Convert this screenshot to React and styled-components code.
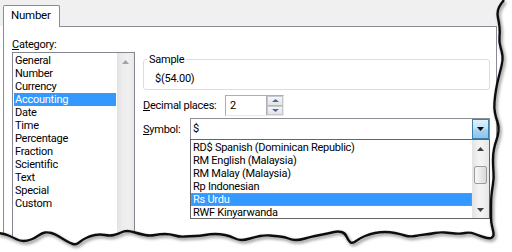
import React from 'react'
import styled, { createGlobalStyle } from 'styled-components'

const GlobalStyle = createGlobalStyle`
  body {
    margin: 0;
    background: #fff;
    font-family: "Segoe UI", Roboto, "Noto Sans", sans-serif;
    font-size: 11px;
    letter-spacing: -0.25px;
    color: #000;
  }
`

const categories = [
    'General', 'Number', 'Currency', 'Accounting', 'Date', 'Time',
    'Percentage', 'Fraction', 'Scientific', 'Text', 'Special', 'Custom',
]

const symbols = [
    'RD$ Spanish (Dominican Republic)',
    'RM English (Malaysia)',
    'RM Malay (Malaysia)',
    'Rp Indonesian',
    'Rs Urdu',
    'RWF Kinyarwanda',
]

// torn paper edge, right side top to bottom then bottom right to left
const tornEdge = [
    [504, 0], [499, 6], [497, 14], [499, 22], [500, 32], [499, 42], [502, 52], [503, 60],
    [500, 72], [497, 84], [495, 96], [494, 108], [496, 118], [499, 126], [498, 136],
    [495, 144], [493, 154], [493, 166], [494, 178], [492, 190], [491, 200], [491, 212],
    [491, 222], [493, 230], [494, 236], [490, 239], [480, 236], [470, 232], [460, 234],
    [450, 233], [440, 232], [430, 234], [420, 235], [410, 237], [400, 234], [390, 232],
    [380, 232], [370, 234], [360, 238], [352, 244], [348, 240], [345, 233], [338, 231],
    [330, 233], [320, 235], [310, 237], [300, 240], [292, 240], [285, 237], [275, 236],
    [265, 235], [255, 237], [245, 240], [238, 240], [230, 236], [220, 234], [210, 234],
    [200, 236], [190, 236], [180, 237], [170, 234], [160, 234], [150, 236], [140, 234],
    [130, 231], [124, 231], [118, 234], [110, 236], [100, 234], [90, 236], [82, 240],
    [76, 245], [70, 243], [63, 239], [55, 234], [48, 232], [42, 233], [35, 238],
    [27, 241], [20, 241], [12, 237], [5, 234], [-2, 233],
]

function smoothPath(pts) {
    let d = `M${pts[0][0]},${pts[0][1]}`
    for (let i = 1; i < pts.length - 1; i++) {
        const mx = (pts[i][0] + pts[i + 1][0]) / 2
        const my = (pts[i][1] + pts[i + 1][1]) / 2
        d += ` Q${pts[i][0]},${pts[i][1]} ${mx},${my}`
    }
    const last = pts[pts.length - 1]
    return d + ` L${last[0]},${last[1]}`
}

function Arrow({ dir = 'down', color = '#000', w = 7, h = 4 }) {
    const d = dir === 'down' ? `M0,0 L${w},0 L${w / 2},${h} Z` : `M0,${h} L${w},${h} L${w / 2},0 Z`
    return (
        <svg width={w} height={h} viewBox={`0 0 ${w} ${h}`}>
            <path d={d} fill={color} />
        </svg>
    )
}

function App() {
    const edge = smoothPath(tornEdge)
    return (
        <>
            <GlobalStyle />
            <Sheet>
                <TabStrip>
                    <Tab>Number</Tab>
                </TabStrip>
                <Panel>
                    <LeftCol>
                        <FieldLabel><u>C</u>ategory:</FieldLabel>
                        <ListBox>
                            <ListItems>
                                {categories.map(c => (
                                    <ListItem key={c} selected={c === 'Accounting'}>{c}</ListItem>
                                ))}
                            </ListItems>
                            <ScrollTrack>
                                <ScrollButton><Arrow dir="up" color="#a3a3a3" /></ScrollButton>
                            </ScrollTrack>
                        </ListBox>
                    </LeftCol>

                    <RightCol>
                        <SampleGroup>
                            <Legend>Sample</Legend>
                            <SampleValue>$(54.00)</SampleValue>
                        </SampleGroup>

                        <FieldRow gap={5}>
                            <RowLabel width={82}><u>D</u>ecimal places:</RowLabel>
                            <SpinBox>
                                <SpinValue>2</SpinValue>
                                <SpinButtons>
                                    <SpinButton><Arrow dir="up" color="#4d6a9a" w={7} h={3} /></SpinButton>
                                    <SpinButton><Arrow dir="down" color="#4d6a9a" w={7} h={3} /></SpinButton>
                                </SpinButtons>
                            </SpinBox>
                        </FieldRow>

                        <FieldRow gap={2}>
                            <RowLabel width={47}><u>S</u>ymbol:</RowLabel>
                            <Combo>
                                <ComboValue>$</ComboValue>
                                <DropButton><Arrow dir="down" /></DropButton>
                            </Combo>
                        </FieldRow>

                        <DropList>
                            <DropItems>
                                {symbols.map(s => (
                                    <DropItem key={s} selected={s === 'Rs Urdu'}>{s}</DropItem>
                                ))}
                            </DropItems>
                            <DropScroll>
                                <ScrollButton><Arrow dir="up" color="#404040" /></ScrollButton>
                                <Thumb />
                                <ScrollButton><Arrow dir="down" color="#404040" /></ScrollButton>
                            </DropScroll>
                        </DropList>
                    </RightCol>
                </Panel>

                <TornOverlay viewBox="0 0 512 252" width="512" height="252">
                    <defs>
                        <filter id="soft" x="-5%" y="-5%" width="110%" height="110%">
                            <feGaussianBlur stdDeviation="0.7" />
                        </filter>
                        <filter id="shade" x="-5%" y="-5%" width="110%" height="110%">
                            <feGaussianBlur stdDeviation="1.6" />
                        </filter>
                    </defs>
                    <path d={`${edge} L-2,260 L520,260 L520,-2 Z`} fill="#fff" />
                    <path d={edge} fill="none" stroke="#9a9a9a" strokeWidth="3" filter="url(#shade)" transform="translate(1.5,2)" />
                    <path d={edge} fill="none" stroke="#111" strokeWidth="2.4" filter="url(#soft)" />
                </TornOverlay>
            </Sheet>
        </>
    )
}

export default App

const Sheet = styled.div`
    position: relative;
    width: 512px;
    height: 252px;
    overflow: hidden;
    background: #fff;
`

const TabStrip = styled.div`
    display: flex;
    align-items: flex-end;
    height: 26px;
    padding: 5px 0 0 3px;
    box-sizing: border-box;
    background: #f0f0f0;
`

const Tab = styled.div`
    position: relative;
    z-index: 1;
    width: 57px;
    height: 22px;
    margin-bottom: -1px;
    box-sizing: border-box;
    padding-left: 7px;
    line-height: 19px;
    font-size: 11.5px;
    background: #fff;
    border: 1px solid #898c95;
    border-bottom: none;
    border-radius: 2px 2px 0 0;
`

const Panel = styled.div`
    display: flex;
    gap: 8px;
    width: 494px;
    height: 226px;
    margin-left: 3px;
    padding: 10px 6px 0 8px;
    box-sizing: border-box;
    background: #fff;
    border: 1px solid #898c95;
    border-bottom: none;
`

const LeftCol = styled.div`
    display: flex;
    flex-direction: column;
    width: 123px;
`

const FieldLabel = styled.div`
    height: 15px;
    line-height: 15px;
`

const ListBox = styled.div`
    flex: 1;
    display: flex;
    border: 1px solid #828790;
`

const ListItems = styled.div`
    flex: 1;
    padding: 1px 1px 0 1px;
`

const ListItem = styled.div`
    height: 13px;
    line-height: 13px;
    padding-left: 1px;
    white-space: nowrap;
    background: ${p => (p.selected ? '#3399ff' : 'transparent')};
    color: ${p => (p.selected ? '#fff' : '#000')};
`

const ScrollTrack = styled.div`
    width: 17px;
    display: flex;
    flex-direction: column;
    background: linear-gradient(to right, #e2e2e2, #ececec 30%, #f0f0f0 70%, #e8e8e8);
`

const ScrollButton = styled.div`
    height: 17px;
    display: flex;
    align-items: center;
    justify-content: center;
`

const RightCol = styled.div`
    display: flex;
    flex-direction: column;
    width: 347px;
    margin-top: 22px;
`

const SampleGroup = styled.div`
    position: relative;
    height: 31px;
    box-sizing: border-box;
    padding: 11px 0 0 11px;
    border: 1px solid #d5dfe5;
    border-radius: 3px;
`

const Legend = styled.span`
    position: absolute;
    left: 3px;
    top: -8px;
    padding: 0 2px;
    line-height: 15px;
    background: #fff;
`

const SampleValue = styled.div`
    line-height: 15px;
`

const FieldRow = styled.div`
    display: flex;
    align-items: center;
    margin-top: ${p => p.gap}px;
`

const RowLabel = styled.div`
    width: ${p => p.width}px;
    flex-shrink: 0;
    line-height: 15px;
`

const SpinBox = styled.div`
    display: flex;
    width: 59px;
    height: 21px;
    box-sizing: border-box;
    border: 1px solid #abadb3;
    border-right-color: #e3e9ef;
    border-bottom-color: #e3e9ef;
`

const SpinValue = styled.div`
    flex: 1;
    padding-left: 4px;
    line-height: 19px;
`

const SpinButtons = styled.div`
    display: flex;
    flex-direction: column;
    width: 16px;
    border-left: 1px solid #abadb3;
`

const SpinButton = styled.div`
    flex: 1;
    display: flex;
    align-items: center;
    justify-content: center;
    background: linear-gradient(#f6f6f6, #e4e4e4);
    border: 1px solid #c6c9cf;
    &:first-child { border-bottom-color: #b5b8bd; }
`

const Combo = styled.div`
    display: flex;
    width: 300px;
    height: 22px;
    box-sizing: border-box;
    border: 1px solid #8d9096;
    border-bottom-color: #595959;
`

const ComboValue = styled.div`
    flex: 1;
    padding-left: 2px;
    line-height: 19px;
`

const DropButton = styled.div`
    width: 17px;
    box-sizing: border-box;
    display: flex;
    align-items: center;
    justify-content: center;
    border: 1px solid #3c7fb1;
    background: linear-gradient(#e1f1fb 0%, #c3e3f8 45%, #a4d3f3 55%, #8dc3e9 100%);
`

const DropList = styled.div`
    display: flex;
    width: 300px;
    height: 80px;
    margin-left: 47px;
    margin-top: -1px;
    box-sizing: border-box;
    border: 1px solid #646464;
`

const DropItems = styled.div`
    flex: 1;
    padding: 1px 0 0 1px;
`

const DropItem = styled.div`
    height: 13px;
    line-height: 11px;
    box-sizing: border-box;
    padding-left: 1px;
    white-space: nowrap;
    background: ${p => (p.selected ? '#3399ff' : 'transparent')};
    color: ${p => (p.selected ? '#fff' : '#000')};
    border: 1px dotted ${p => (p.selected ? '#d98b3c' : 'transparent')};
    margin-left: -1px;
`

const DropScroll = styled.div`
    width: 17px;
    display: flex;
    flex-direction: column;
    justify-content: space-between;
    background: linear-gradient(to right, #e3e3e3, #f2f2f2 40%, #f2f2f2 60%, #e6e6e6);
`

const Thumb = styled.div`
    height: 16px;
    margin: 0 2px;
    border: 1px solid #9c9c9c;
    border-radius: 2px;
    background: linear-gradient(to right, #f7f7f7, #e9e9e9 50%, #d9d9d9);
    margin-top: -8px;
`

const TornOverlay = styled.svg`
    position: absolute;
    left: 0;
    top: 0;
    pointer-events: none;
`
